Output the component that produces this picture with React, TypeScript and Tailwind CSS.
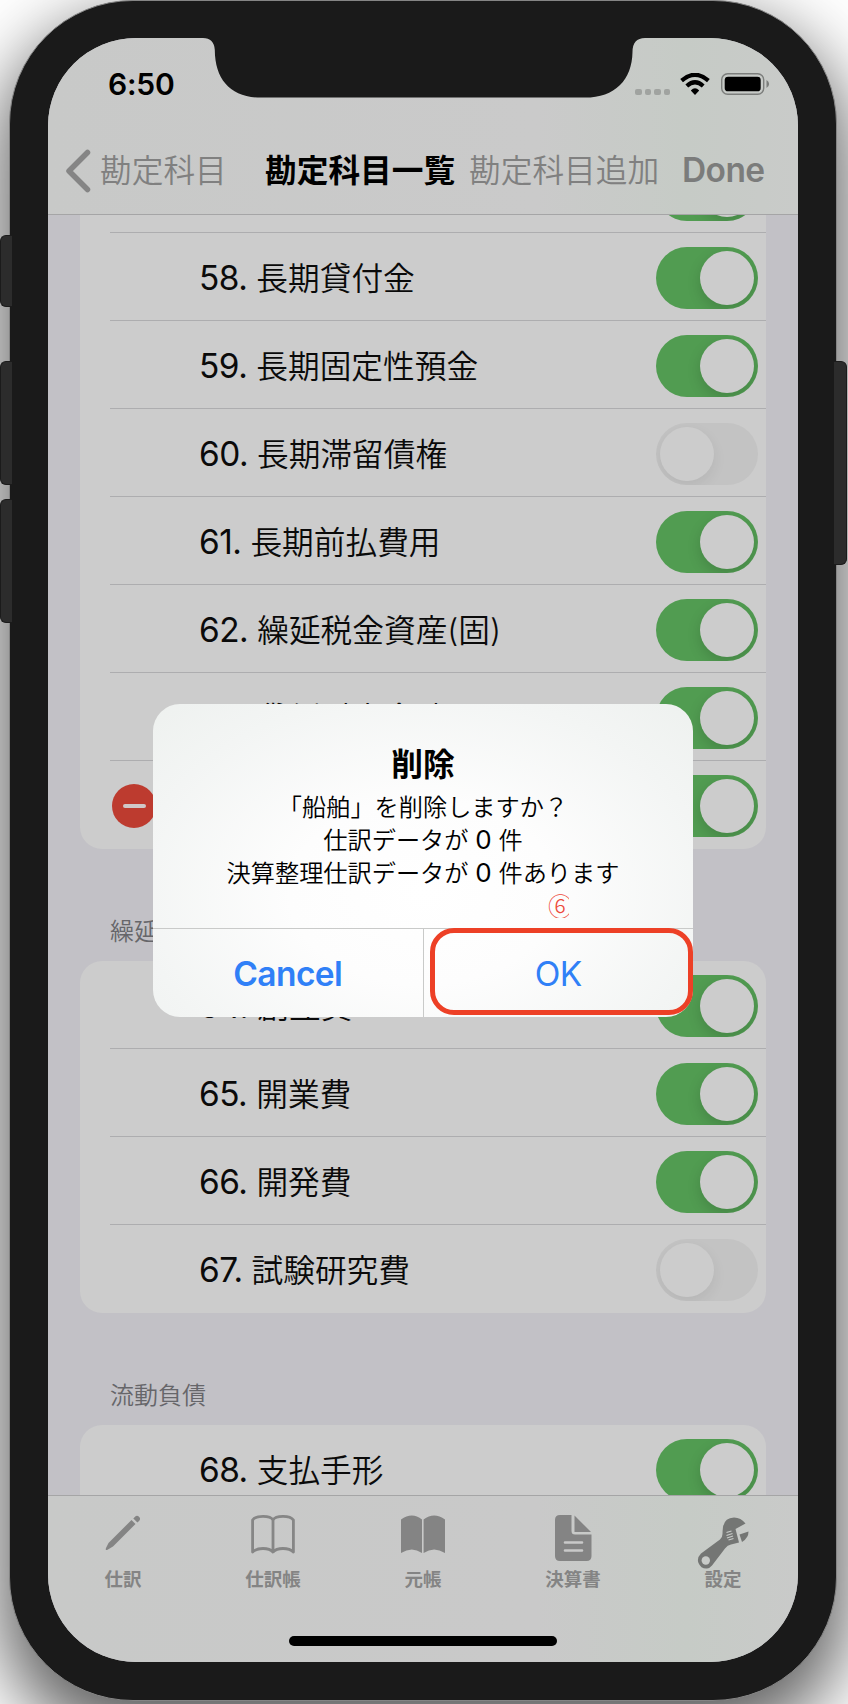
import React from "react";

type Row = { no?: string; name: string; on: boolean; removable?: boolean };

const sans = "font-['Inter','Noto_Sans_CJK_JP',sans-serif]";

const assets: Row[] = [
  { no: "58.", name: "長期貸付金", on: true },
  { no: "59.", name: "長期固定性預金", on: true },
  { no: "60.", name: "長期滞留債権", on: false },
  { no: "61.", name: "長期前払費用", on: true },
  { no: "62.", name: "繰延税金資産(固)", on: true },
  { no: "63.", name: "貸倒引当金(部)", on: true },
  { name: "", on: true, removable: true },
];
const deferred: Row[] = [
  { no: "64.", name: "創立費", on: true },
  { no: "65.", name: "開業費", on: true },
  { no: "66.", name: "開発費", on: true },
  { no: "67.", name: "試験研究費", on: false },
];
const liabilities: Row[] = [{ no: "68.", name: "支払手形", on: true }];

function Toggle({ on }: { on: boolean }) {
  return on ? (
    <div className="flex h-[62px] w-[102px] shrink-0 justify-end overflow-hidden rounded-full bg-[#519c51] p-1">
      <div className="size-[54px] rounded-full bg-[#cccccc] shadow-[0_5px_14px_rgba(0,0,0,0.15)]" />
    </div>
  ) : (
    <div className="flex h-[62px] w-[102px] shrink-0 justify-start overflow-hidden rounded-full bg-[#c3c3c3] p-1">
      <div className="size-[54px] rounded-full bg-[#cccccc] shadow-[0_5px_14px_rgba(0,0,0,0.07)]" />
    </div>
  );
}

function Item({ row, last }: { row: Row; last: boolean }) {
  return (
    <div className="flex h-[88px] pl-[30px]">
      <div
        className={
          last
            ? "flex flex-1 items-center pr-2 pt-px"
            : "flex flex-1 items-center border-b border-[#adadaf] pr-2 pt-[2px]"
        }
      >
        <div className="w-[90px] shrink-0 pl-[2px]">
          {row.removable && (
            <div className="flex size-11 items-center justify-center rounded-full bg-[#bd3b2f]">
              <div className="h-1 w-[23px] rounded-full bg-[#d0c8c8]" />
            </div>
          )}
        </div>
        <div className="flex flex-1 items-center whitespace-nowrap pt-[2px] text-[#0a0a0a]">
          {row.no && (
            <span className="-ml-px mr-[9px] text-[33.4px] leading-none tracking-[-0.5px]">{row.no}</span>
          )}
          <span className="text-[31.7px] font-[350] leading-none">{row.name}</span>
        </div>
        <Toggle on={row.on} />
      </div>
    </div>
  );
}

function Group({ rows, open }: { rows: Row[]; open?: "top" | "bottom" }) {
  return (
    <div
      className={
        open === "top"
          ? "mx-8 shrink-0 rounded-b-[22px] bg-[#cccccc]"
          : open === "bottom"
            ? "mx-8 shrink-0 rounded-t-[22px] bg-[#cccccc]"
            : "mx-8 shrink-0 rounded-[22px] bg-[#cccccc]"
      }
    >
      {rows.map((r, i) => (
        <Item key={i} row={r} last={i === rows.length - 1} />
      ))}
    </div>
  );
}

function Header({ children }: { children: string }) {
  return (
    <div className="flex h-28 shrink-0 items-end pb-[17px] pl-[62px] text-[24px] font-[350] leading-6 text-[#66666a]">
      {children}
    </div>
  );
}

function Tab({ label, children }: { label: string; children: React.ReactNode }) {
  return (
    <div className="flex w-[150px] flex-col items-center">
      <div className="flex h-[54px] w-full items-start justify-center">{children}</div>
      <span className="text-[18.5px] font-bold leading-5 text-[#848484]">{label}</span>
    </div>
  );
}

export default function App() {
  return (
    <div className={`relative h-[1704px] w-[848px] overflow-hidden bg-white ${sans}`}>
      {/* side buttons */}
      <div className="absolute left-0 top-[235px] z-10 h-[72px] w-3 rounded-l-[6px] border border-r-0 border-[#1b1b1b] bg-[#2c2c2c]" />
      <div className="absolute left-0 top-[361px] z-10 h-[124px] w-3 rounded-l-[6px] border border-r-0 border-[#1b1b1b] bg-[#2c2c2c]" />
      <div className="absolute left-0 top-[499px] z-10 h-[124px] w-3 rounded-l-[6px] border border-r-0 border-[#1b1b1b] bg-[#2c2c2c]" />
      <div className="absolute left-[834px] top-[361px] z-10 h-[204px] w-[13px] rounded-r-[6px] border border-l-0 border-[#1b1b1b] bg-[#2c2c2c]" />

      <div className="mx-auto ml-[9px] h-[1701px] w-[828px] rounded-[124px] border border-[#858585] bg-[#1a1a1a] px-[38px] pt-[37px] shadow-[0_30px_70px_10px_rgba(0,0,0,0.62)]">
        <div className="relative flex h-[1624px] w-[750px] flex-col overflow-hidden rounded-[88px] bg-[#c2c1c6]">
          {/* status and navigation bars */}
          <div className="relative h-[177px] shrink-0 border-b border-[#a5a5a6] bg-[linear-gradient(90deg,#c8c9c8_0%,#cacaca_65%,#c6cbc6_85%,#c9cbc9_100%)]">
            <div className="flex h-[88px] items-start justify-between pl-[60px] pr-[28px] pt-[31px]">
              <span className="text-[30px] font-semibold leading-[30px] tracking-[-0.2px] text-black">6:50</span>
              <div className="flex items-center gap-[10px] pt-1">
                <div className="flex gap-[3px] pt-4">
                  {[0, 1, 2, 3].map((d) => (
                    <div key={d} className="size-[6.4px] rounded-[2px] bg-[#a0a3a0]" />
                  ))}
                </div>
                <svg width="30" height="22" viewBox="0 0 30 22" fill="none" stroke="#000" strokeWidth="4.2">
                  <path d="M1.6 7.6Q15-4 28.4 7.6" />
                  <path d="M6.8 13Q15 5.6 23.2 13" />
                  <path d="M15 22l-4.2-4.6Q15 13 19.2 17.4z" fill="#000" stroke="none" />
                </svg>
                <svg width="50" height="22" viewBox="0 0 50 22">
                  <rect x="1.7" y="0.7" width="42" height="20.6" rx="6" fill="none" stroke="#7c7e7c" strokeWidth="1.4" />
                  <rect x="4.7" y="3.7" width="36" height="14.6" rx="3.4" fill="#000" />
                  <path d="M46.5 7q2.6 1.4 2.6 4t-2.6 4z" fill="#7c7e7c" />
                </svg>
              </div>
            </div>
            <div className="flex h-[88px] items-center whitespace-nowrap pl-[17px] pt-[2px] text-[31.7px] leading-none text-[#808080]">
              <svg width="26" height="44" viewBox="0 0 26 44" fill="none" stroke="#858585" strokeWidth="5.5" strokeLinecap="round" strokeLinejoin="round">
                <path d="M22.5 3.5L4 22l18.500 18.500" />
              </svg>
              <span className="ml-[9px] w-[127px] font-[350]">勘定科目</span>
              <span className="ml-[38px] w-[191px] font-bold text-black">勘定科目一覧</span>
              <span className="ml-[13px] w-[191px] font-[350]">勘定科目追加</span>
              <span className="ml-[22px] text-[33.5px] font-semibold tracking-[-0.6px] text-[#7b7c7b]">Done</span>
            </div>
            <svg className="absolute left-[163px] top-0 overflow-visible" width="426" height="60" viewBox="0 0 426 60">
              <path d="M-8 -2V0Q3 0 3.800 12C4 42 20 59.600 50 59.600H374C404 59.600 421 42 421.500 14Q421.500 0 434 0V-2z" fill="#1a1a1a" />
            </svg>
          </div>

          {/* account list */}
          <div className="flex min-h-0 flex-1 flex-col overflow-hidden">
            <div className="mx-8 flex h-[18px] shrink-0 items-end bg-[#cccccc] pl-[30px]">
              <div className="flex h-[18px] flex-1 items-end overflow-hidden border-b border-[#adadaf] pr-2">
                <div className="mb-[11px] ml-auto">
                  <Toggle on />
                </div>
              </div>
            </div>
            <Group rows={assets} open="top" />
            <Header>繰延資産</Header>
            <Group rows={deferred} />
            <Header>流動負債</Header>
            <Group rows={liabilities} open="bottom" />
          </div>

          {/* tab bar */}
          <div className="h-[167px] shrink-0 border-t border-[#a5a5a6] bg-[linear-gradient(90deg,#c8c9c8_0%,#c9c9c9_65%,#c6cbc6_85%,#c9cac9_100%)]">
            <div className="flex pt-[19px]">
              <Tab label="仕訳">
                <svg width="36" height="36" viewBox="0 0 36 36" fill="#848484">
                  <path d="M1 35Q.5 34.500 1 33L3.500 28L26.500 5L30.500 9L8 31.500L2.500 34.800Q1.500 35.300 1 35zM28.300 3.400L30 1.700Q32 0 34 1.700T34.300 5.700L32.400 7.500z" />
                </svg>
              </Tab>
              <Tab label="仕訳帳">
                <svg width="44" height="39" viewBox="0 0 44 39" fill="none" stroke="#868686" strokeWidth="2.800" strokeLinejoin="round">
                  <path d="M22 37V5Q20 1.400 12 1.400Q4 1.400 1.600 5V37Q5 33.500 12 33.500T22 37Q25 33.500 32 33.500T42.400 37V5Q40 1.400 32 1.400T22 5" />
                </svg>
              </Tab>
              <Tab label="元帳">
                <svg width="44" height="39" viewBox="0 0 44 39" fill="#848484">
                  <path d="M0 4.500Q11-3.500 21 4.500V38Q11 31 0 38zM22.600 4.500Q33-3.500 44 4.500V38Q33 31 22.600 38z" />
                </svg>
              </Tab>
              <Tab label="決算書">
                <svg width="38" height="47" viewBox="0 0 38 47">
                  <path d="M6 0H17.500V16Q17.500 19.500 21 19.500H37.500V41Q37.500 46 32.500 46H6Q1 46 1 41V5Q1 0 6 0zM20.500 .5L37 17H20.500z" fill="#848484" />
                  <path d="M11 27.500H28M11 35.500H28" stroke="#c9c9c9" strokeWidth="2.600" strokeLinecap="round" />
                </svg>
              </Tab>
              <Tab label="設定">
                <svg className="mt-px shrink-0" width="52" height="53" viewBox="0 0 52 53">
                  <path d="M48.500 7.500Q44 1.500 37 1.500Q27.500 2 26 11Q25.500 15 25.500 18Q25.500 21 23 23.500L4 37.500Q-.5 42 1.500 47Q4 53 10 52.500Q13 52 15 49.500L28 32.500Q30.500 29 34 28.500L42 26.500L38.500 13z" fill="#747674" />
                  <path d="M42.500 18.500L51.500 15.500Q51.500 22 45 26z" fill="#747674" />
                  <circle cx="8.800" cy="44.500" r="4.200" fill="#c8cbc8" />
                  <path d="M29.500 16.500l5-1.500M29.500 19.500l6-2M30 22l6-2M31.500 24l5-1.500" fill="none" stroke="#c8cbc8" strokeWidth="1.200" />
                </svg>
              </Tab>
            </div>
            <div className="mx-auto mt-[47px] h-[10px] w-[268px] rounded-full bg-black" />
          </div>
        </div>
      </div>

      {/* confirmation dialog */}
      <div className="absolute left-[153px] top-[704px] z-20 flex h-[313px] w-[540px] flex-col overflow-hidden rounded-[27px] bg-[radial-gradient(ellipse_at_50%_60%,#ffffff_0%,#fdfdfd_35%,#f3f5f4_75%,#eef1ef_100%)] text-center">
        <div className="h-[224px] whitespace-nowrap pt-[45px] text-black">
          <div className="text-[31.7px] font-bold leading-8">削除</div>
          <div className="mt-[11px] text-[24.200px] font-[350] leading-8">
            <div>「船舶」を削除しますか？</div>
            <div>
              仕訳データが <span className="text-[26px] font-normal">0</span> 件
            </div>
            <div>
              決算整理仕訳データが <span className="text-[26px] font-normal">0</span> 件あります
            </div>
          </div>
        </div>
        <div className="flex flex-1 border-t border-[#c9cac9] pt-[3px] text-[33.500px] leading-none text-[#3080f7]">
          <div className="-mt-[3px] flex w-[270.500px] items-center justify-center border-r border-[#c9cac9] pt-[3px] font-semibold tracking-[-0.6px]">
            Cancel
          </div>
          <div className="flex flex-1 items-center justify-center tracking-[-0.5px]">OK</div>
        </div>
      </div>
      <div className="absolute left-[430px] top-[928px] z-30 h-[87px] w-[263px] rounded-[24px] border-[5px] border-[#ed4026]" />
      <div className="absolute left-[548px] top-[893px] z-30 w-[21px] overflow-hidden font-['Noto_Sans_CJK_JP',sans-serif] text-[25px] font-light leading-[25px] text-[#ed4a3a]">
        ⑥
      </div>
    </div>
  );
}
